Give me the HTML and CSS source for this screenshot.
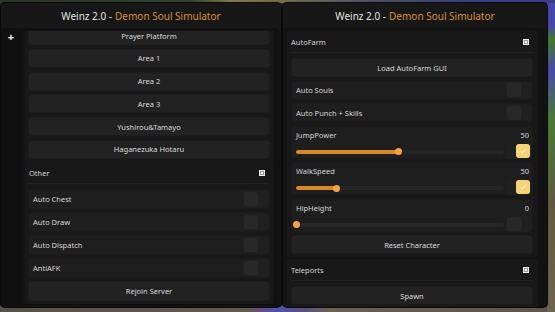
FILE: index.html
```html
<!DOCTYPE html>
<html>
<head>
<meta charset="utf-8">
<link rel="stylesheet" href="styles.css">
</head>
<body>
<div class="stage">
  <div class="win win-left">
    <div class="title">Weinz 2.0 - <span class="accent">Demon Soul Simulator</span></div>
    <div class="win-body">
      <div class="sidebar"><span class="plus">+</span></div>
      <div class="panel">
        <div class="viewport">
          <div class="scroll">
            <div class="sec sec-cut">
              <div class="list list-buttons">
                <div class="btn">Prayer Platform</div>
                <div class="btn">Area 1</div>
                <div class="btn">Area 2</div>
                <div class="btn">Area 3</div>
                <div class="btn">Yushirou&amp;Tamayo</div>
                <div class="btn">Haganezuka Hotaru</div>
              </div>
            </div>
            <div class="sec">
              <div class="sec-head"><span>Other</span>
                <svg class="close" width="6" height="6" viewBox="0 0 6 6"><rect x="0.5" y="0.5" width="5" height="5" fill="#9a9a9a" stroke="#f0f0f0"/><path d="M2 2L4 4M4 2L2 4" stroke="#ffffff" stroke-width="0.9"/></svg>
              </div>
              <div class="list list-rows">
                <div class="row"><span>Auto Chest</span><div class="tog"><div class="knob"></div></div></div>
                <div class="row"><span>Auto Draw</span><div class="tog"><div class="knob"></div></div></div>
                <div class="row"><span>Auto Dispatch</span><div class="tog"><div class="knob"></div></div></div>
                <div class="row"><span>AntiAFK</span><div class="tog"><div class="knob"></div></div></div>
                <div class="btn btn-row">Rejoin Server</div>
              </div>
            </div>
          </div>
        </div>
      </div>
    </div>
  </div>

  <div class="win win-right">
    <div class="title">Weinz 2.0 - <span class="accent">Demon Soul Simulator</span></div>
    <div class="panel panel-right">
      <div class="sec sec-r">
        <div class="sec-head"><span>AutoFarm</span>
          <svg class="close" width="6" height="6" viewBox="0 0 6 6"><rect x="0.5" y="0.5" width="5" height="5" fill="#9a9a9a" stroke="#f0f0f0"/><path d="M2 2L4 4M4 2L2 4" stroke="#ffffff" stroke-width="0.9"/></svg>
        </div>
        <div class="list list-r">
          <div class="btn">Load AutoFarm GUI</div>
          <div class="row row-r"><span>Auto Souls</span><div class="tog"><div class="knob"></div></div></div>
          <div class="row row-r"><span>Auto Punch + Skills</span><div class="tog"><div class="knob"></div></div></div>
          <div class="slider">
            <div class="sl-top"><span>JumpPower</span><span>50</span></div>
            <div class="sl-bottom">
              <div class="track"><div class="fill" style="width:49.3%"><div class="dot"></div></div></div>
              <div class="tog on"><div class="knob"><svg width="8" height="8" viewBox="0 0 8 8"><path d="M1.5 4.2L3.3 5.8L6.6 2.2" fill="none" stroke="#fff6dc" stroke-width="1"/></svg></div></div>
            </div>
          </div>
          <div class="slider">
            <div class="sl-top"><span>WalkSpeed</span><span>50</span></div>
            <div class="sl-bottom">
              <div class="track"><div class="fill" style="width:19.6%"><div class="dot"></div></div></div>
              <div class="tog on"><div class="knob"><svg width="8" height="8" viewBox="0 0 8 8"><path d="M1.5 4.2L3.3 5.8L6.6 2.2" fill="none" stroke="#fff6dc" stroke-width="1"/></svg></div></div>
            </div>
          </div>
          <div class="slider">
            <div class="sl-top"><span>HipHeight</span><span>0</span></div>
            <div class="sl-bottom">
              <div class="track"><div class="fill" style="width:0%"><div class="dot"></div></div></div>
              <div class="tog"><div class="knob"></div></div>
            </div>
          </div>
          <div class="btn">Reset Character</div>
        </div>
      </div>
      <div class="sec sec-r">
        <div class="sec-head"><span>Teleports</span>
          <svg class="close" width="6" height="6" viewBox="0 0 6 6"><rect x="0.5" y="0.5" width="5" height="5" fill="#9a9a9a" stroke="#f0f0f0"/><path d="M2 2L4 4M4 2L2 4" stroke="#ffffff" stroke-width="0.9"/></svg>
        </div>
        <div class="list list-r">
          <div class="btn">Spawn</div>
        </div>
      </div>
    </div>
  </div>
</div>
</body>
</html>
```

FILE: styles.css
```css
* { box-sizing: border-box; }
html, body { margin: 0; padding: 0; }
body {
  width: 555px;
  height: 312px;
  overflow: hidden;
  font-family: "Noto Sans", "Open Sans", sans-serif;
  color: #dcdcdc;
  background:
    linear-gradient(90deg, #2c352a 0, #34402c 190px, #7c7a3e 230px, #6e6a4a 290px, #4c4c66 380px, #3a3c86 480px, #3a3c86 555px) top / 100% 3px no-repeat,
    linear-gradient(180deg, #4a46a8 0, #4a46a8 25px, #3f7a30 40px, #4a4aa8 70px, #4b7a34 120px, #5f5a3e 200px, #6c6452 312px) right / 8px 100% no-repeat,
    linear-gradient(90deg, #555049 0, #615a4e 250px, #6a4a8a 262px, #4858b0 275px, #5a4f86 300px, #6a6052 330px, #5c5548 555px) bottom / 100% 6px no-repeat,
    #2a2a26;
}
.stage {
  display: flex;
  gap: 2px;
  padding: 3px 0 0 1px;
}
.win {
  height: 304px;
  background: #121212;
  border-radius: 4px;
  display: flex;
  flex-direction: column;
  overflow: hidden;
  box-shadow: 0 0 0 1px #0b0b0b;
}
.win-left { width: 280px; }
.win-right { width: 264px; }
.title {
  height: 25px;
  flex: none;
  display: flex;
  align-items: center;
  justify-content: center;
  font-size: 10px;
  color: #e2e2e2;
  background: #171717;
  padding-top: 1px;
}
.accent { color: #d98f3a; margin-left: 3px; }
.win-body {
  flex: 1;
  display: flex;
  min-height: 0;
}
.sidebar {
  width: 20px;
  flex: none;
  background: #101010;
  display: flex;
  justify-content: center;
  padding-top: 2px;
}
.plus {
  color: #f2f2f2;
  font-size: 11px;
  font-weight: 700;
  line-height: 14px;
}
.panel {
  flex: 1;
  margin: 1px 5px 2px 1px;
  background: #141414;
  border: 1px solid #0d0d0d;
  padding: 1px 2px 0 2px;
  min-height: 0;
  display: flex;
  flex-direction: column;
}
.viewport {
  flex: 1;
  overflow: hidden;
  min-height: 0;
}
.scroll {
  margin-top: -5px;
  display: flex;
  flex-direction: column;
  gap: 0;
}
.sec {
  background: #181818;
  border-radius: 3px;
  padding: 1px 3px 3px;
}
.sec-cut { padding-top: 0; }
.sec-head {
  height: 21px;
  border-bottom: 1px solid #222;
  display: flex;
  align-items: center;
  justify-content: space-between;
  padding: 0 5px 0 1px;
  font-size: 7.5px;
  color: #d6d6d6;
}
.close { display: block; }
.list {
  display: flex;
  flex-direction: column;
}
.list-buttons { gap: 3.75px; }
.list-rows { gap: 3px; margin-top: 5px; }
.btn {
  height: 19px;
  background: #222;
  border: 1px solid #1d1d1d;
  border-radius: 3px;
  display: flex;
  align-items: center;
  justify-content: center;
  font-size: 7.5px;
  color: #dadada;
}
.btn-row { height: 20px; }
.row {
  height: 20px;
  background: #1e1e1e;
  border: 1px solid #1b1b1b;
  border-radius: 3px;
  display: flex;
  align-items: center;
  justify-content: space-between;
  padding: 0 1px 0 4px;
  font-size: 7.5px;
  color: #d6d6d6;
}
.tog {
  width: 25px;
  height: 16px;
  background: #202020;
  border-radius: 3px;
  display: flex;
  align-items: center;
  padding: 1px;
}
.tog .knob {
  width: 14px;
  height: 14px;
  background: #282828;
  border-radius: 3px;
  display: flex;
  align-items: center;
  justify-content: center;
}
.tog.on { justify-content: flex-end; }
.tog.on .knob { background: #f5d57a; }

/* right window */
.panel-right {
  margin: 1px 9px 2px 1px;
  padding: 2px 0 0 3px;
  gap: 2px;
  border: none;
  background: #131313;
}
.sec-r { padding: 1px 5px 3px 4px; }
.sec-r .sec-head { padding: 0 4px 0 0; }
.list-r { gap: 3.5px; margin-top: 5px; }
.row-r { height: 19px; }
.slider {
  height: 33px;
  background: #1e1e1e;
  border: 1px solid #1b1b1b;
  border-radius: 3px;
  padding: 3px 1px 0 4px;
  font-size: 7.5px;
  color: #d6d6d6;
}
.sl-top {
  display: flex;
  justify-content: space-between;
  padding-right: 2px;
  height: 10px;
  line-height: 10px;
}
.sl-bottom {
  display: flex;
  align-items: center;
  gap: 2px;
  margin-top: 3px;
}
.track {
  flex: 1;
  height: 4px;
  background: #262626;
  border-radius: 2px;
  display: flex;
  margin-top: 2px;
}
.fill {
  height: 4px;
  background: #d8892c;
  border-radius: 2px;
  position: relative;
}
.dot {
  position: absolute;
  right: -3.5px;
  top: -1.5px;
  width: 7px;
  height: 7px;
  border-radius: 50%;
  background: #f2a444;
}
```
